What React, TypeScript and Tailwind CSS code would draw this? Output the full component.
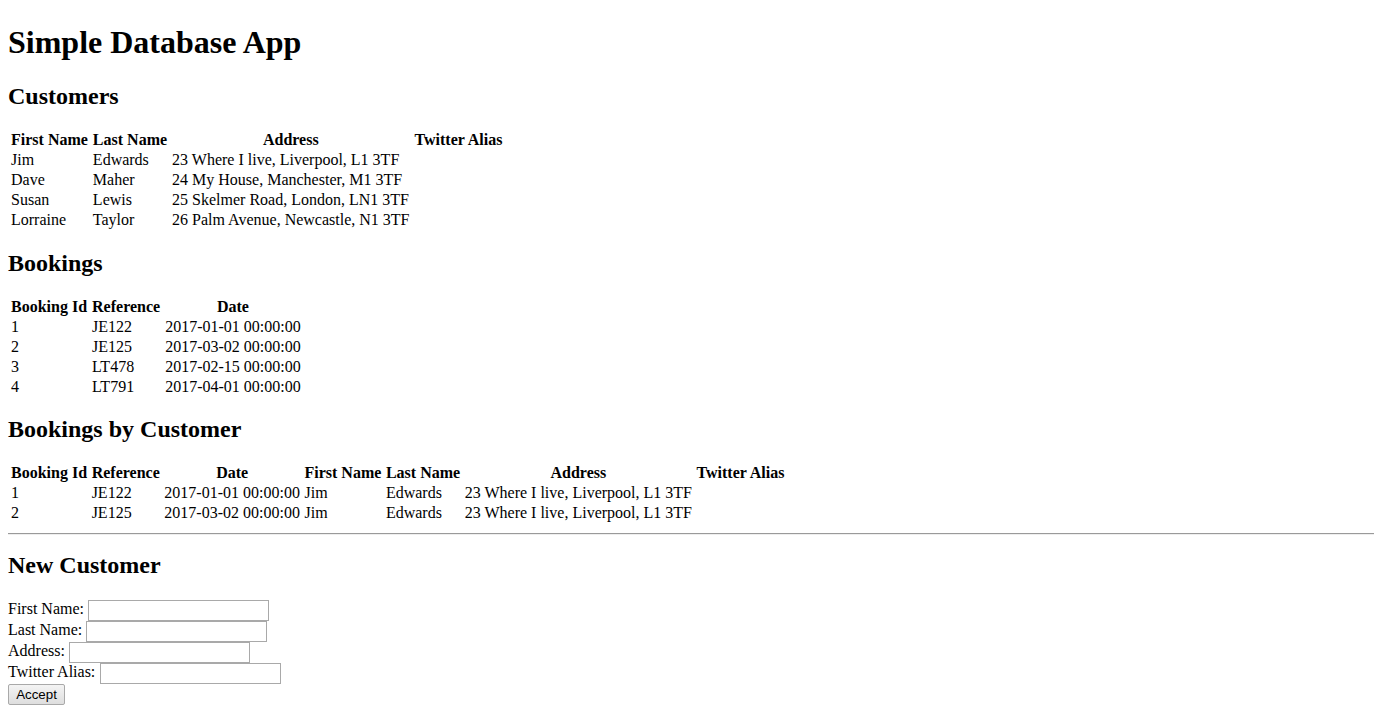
import React from "react";

const customers = [
  ["Jim", "Edwards", "23 Where I live, Liverpool, L1 3TF", ""],
  ["Dave", "Maher", "24 My House, Manchester, M1 3TF", ""],
  ["Susan", "Lewis", "25 Skelmer Road, London, LN1 3TF", ""],
  ["Lorraine", "Taylor", "26 Palm Avenue, Newcastle, N1 3TF", ""],
];

const bookings = [
  ["1", "JE122", "2017-01-01 00:00:00"],
  ["2", "JE125", "2017-03-02 00:00:00"],
  ["3", "LT478", "2017-02-15 00:00:00"],
  ["4", "LT791", "2017-04-01 00:00:00"],
];

const byCustomer = [
  ["1", "JE122", "2017-01-01 00:00:00", "Jim", "Edwards", "23 Where I live, Liverpool, L1 3TF", ""],
  ["2", "JE125", "2017-03-02 00:00:00", "Jim", "Edwards", "23 Where I live, Liverpool, L1 3TF", ""],
];

function Table({ head, rows, tight }: { head: string[]; rows: string[][]; tight?: boolean }) {
  const pad = tight ? "pl-[1px] pr-[1.6px]" : "pl-[1px] pr-[2px]";
  return (
    <table className="border-separate border-spacing-[2px]">
      <thead>
        <tr>
          {head.map((h) => (
            <th key={h} className={`${pad} py-0 leading-[18px] font-bold text-center`}>
              {h}
            </th>
          ))}
        </tr>
      </thead>
      <tbody>
        {rows.map((r, i) => (
          <tr key={i}>
            {r.map((c, j) => (
              <td key={j} className={`${pad} py-0 leading-[18px] text-left`}>
                {c}
              </td>
            ))}
          </tr>
        ))}
      </tbody>
    </table>
  );
}

function Field({ label, gap }: { label: string; gap: string }) {
  return (
    <div className="h-[21px] flex items-end leading-[18px]">
      <span className="mb-[3px]">{label}</span>
      <span className={gap} />
      <input
        type="text"
        className="w-[181px] h-[21px] border border-[#a9a9a9] bg-white px-[2px] text-[13.33px] font-['Liberation_Sans',sans-serif] outline-none"
      />
    </div>
  );
}

export default function App() {
  return (
    <div className="px-[8px] pt-[1px] bg-white text-black font-['Liberation_Serif','Times_New_Roman',serif] text-[16px] min-h-[713px]">
      <h1 className="text-[32px] font-bold leading-[37px] mt-[23px] mb-[21px]">Simple Database App</h1>
      <h2 className="text-[24px] font-bold leading-[28px] mt-[20px] mb-[19px]">Customers</h2>
      <Table head={["First Name", "Last Name", "Address", "Twitter Alias"]} rows={customers} />
      <h2 className="text-[24px] font-bold leading-[28px] mt-[18px] mb-[19px]">Bookings</h2>
      <Table head={["Booking Id", "Reference", "Date"]} rows={bookings} />
      <h2 className="text-[24px] font-bold leading-[28px] mt-[17px] mb-[19px]">Bookings by Customer</h2>
      <Table
        tight
        head={["Booking Id", "Reference", "Date", "First Name", "Last Name", "Address", "Twitter Alias"]}
        rows={byCustomer}
      />
      <hr className="mt-[9px] mb-[8px] border-0 border-t border-t-[#9a9a9a] border-b border-b-[#eeeeee] w-[1366px]" />
      <h2 className="text-[24px] font-bold leading-[28px] mt-[16px] mb-[21px]">New Customer</h2>
      <form onSubmit={(e) => e.preventDefault()}>
        <Field label="First Name:" gap="w-[4px]" />
        <Field label="Last Name:" gap="w-[4px]" />
        <Field label="Address:" gap="w-[4px]" />
        <Field label="Twitter Alias:" gap="w-[5px]" />
        <button
          type="submit"
          className="block h-[21px] w-[57px] border border-[#a9a9a9] rounded-[2px] bg-gradient-to-b from-[#f4f4f4] to-[#dedede] text-[13.33px] font-['Liberation_Sans',sans-serif] text-black leading-[15px]"
        >
          Accept
        </button>
      </form>
    </div>
  );
}
